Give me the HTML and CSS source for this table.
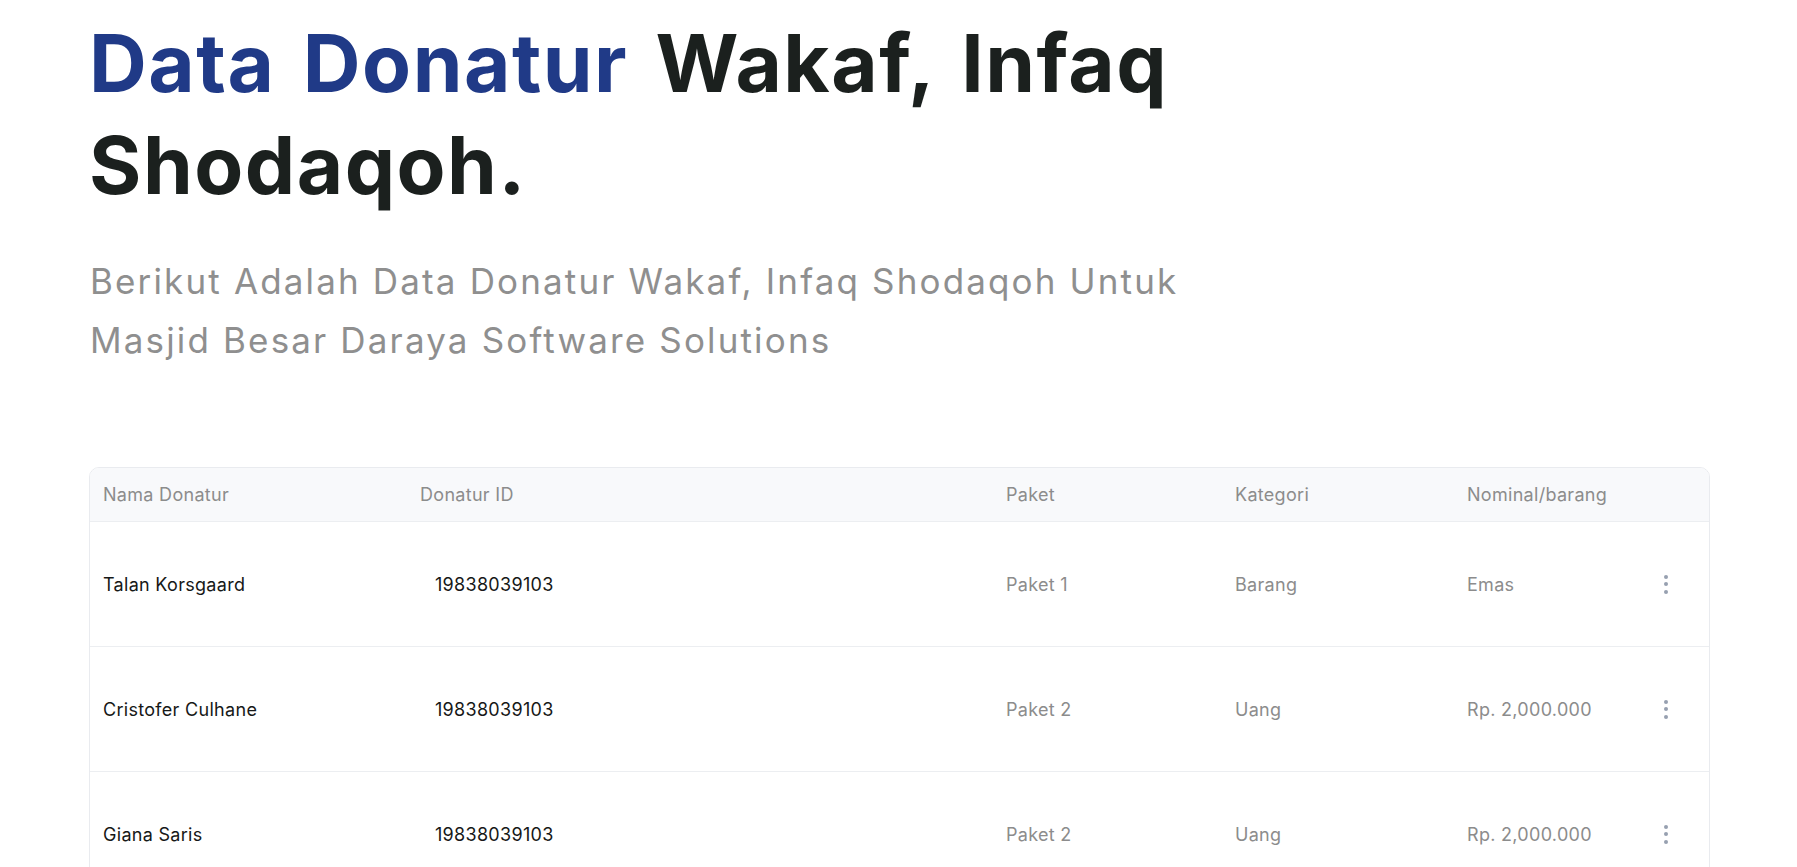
FILE: index.html
```html
<!DOCTYPE html>
<html lang="id">
<head>
<meta charset="utf-8">
<title>Data Donatur</title>
<link rel="stylesheet" href="styles.css">
</head>
<body>
<main class="page">
  <h1 class="title"><span class="accent">Data Donatur</span> Wakaf, Infaq<br>Shodaqoh.</h1>
  <p class="subtitle">Berikut Adalah Data Donatur Wakaf, Infaq Shodaqoh Untuk<br>Masjid Besar Daraya Software Solutions</p>

  <section class="card">
    <div class="row head">
      <div class="cell">Nama Donatur</div>
      <div class="cell">Donatur ID</div>
      <div class="cell">Paket</div>
      <div class="cell">Kategori</div>
      <div class="cell">Nominal/barang</div>
      <div class="cell"></div>
    </div>
    <div class="row">
      <div class="cell name">Talan Korsgaard</div>
      <div class="cell id">19838039103</div>
      <div class="cell muted">Paket 1</div>
      <div class="cell muted">Barang</div>
      <div class="cell muted">Emas</div>
      <div class="cell more"><span class="dots"><i></i><i></i><i></i></span></div>
    </div>
    <div class="row">
      <div class="cell name">Cristofer Culhane</div>
      <div class="cell id">19838039103</div>
      <div class="cell muted">Paket 2</div>
      <div class="cell muted">Uang</div>
      <div class="cell muted">Rp. 2,000.000</div>
      <div class="cell more"><span class="dots"><i></i><i></i><i></i></span></div>
    </div>
    <div class="row">
      <div class="cell name">Giana Saris</div>
      <div class="cell id">19838039103</div>
      <div class="cell muted">Paket 2</div>
      <div class="cell muted">Uang</div>
      <div class="cell muted">Rp. 2,000.000</div>
      <div class="cell more"><span class="dots"><i></i><i></i><i></i></span></div>
    </div>
  </section>
</main>
</body>
</html>
```

FILE: styles.css
```css
* { box-sizing: border-box; }
html, body { margin: 0; background: #ffffff; }
body { font-family: Inter, "Noto Sans", sans-serif; }

.page {
  padding: 12px 87px 0 89px;
}

.title {
  margin: 0;
  font-size: 80px;
  line-height: 102px;
  font-weight: 700;
  color: #1b201e;
  letter-spacing: 1.5px;
  word-spacing: 7px;
}
.accent { color: #203a87; }

.subtitle {
  margin: 36px 0 0 1px;
  font-size: 35px;
  line-height: 59px;
  color: #8f8f8f;
  font-weight: 400;
  letter-spacing: 2.15px;
}

.card {
  margin-top: 97px;
  border: 1px solid #e9ebef;
  border-radius: 10px;
  overflow: hidden;
}

.row {
  display: grid;
  grid-template-columns: 317px 586px 229px 232px 1fr 64px;
  align-items: center;
  height: 125px;
  padding-left: 13px;
  border-top: 1px solid #eceef1;
  font-size: 18px;
  letter-spacing: 0.3px;
}
.row.head {
  height: 53px;
  border-top: none;
  background: #f8f9fb;
  color: #8c8c8c;
}

.name { color: #161817; }
.id { color: #161817; padding-left: 15px; }
.muted { color: #8c8c8c; }

.more { display: flex; justify-content: flex-start; padding-left: 19px; }
.dots { display: flex; flex-direction: column; gap: 3.5px; }
.dots i {
  display: block;
  width: 4px;
  height: 4px;
  border-radius: 50%;
  background: #97a0b0;
}
```
